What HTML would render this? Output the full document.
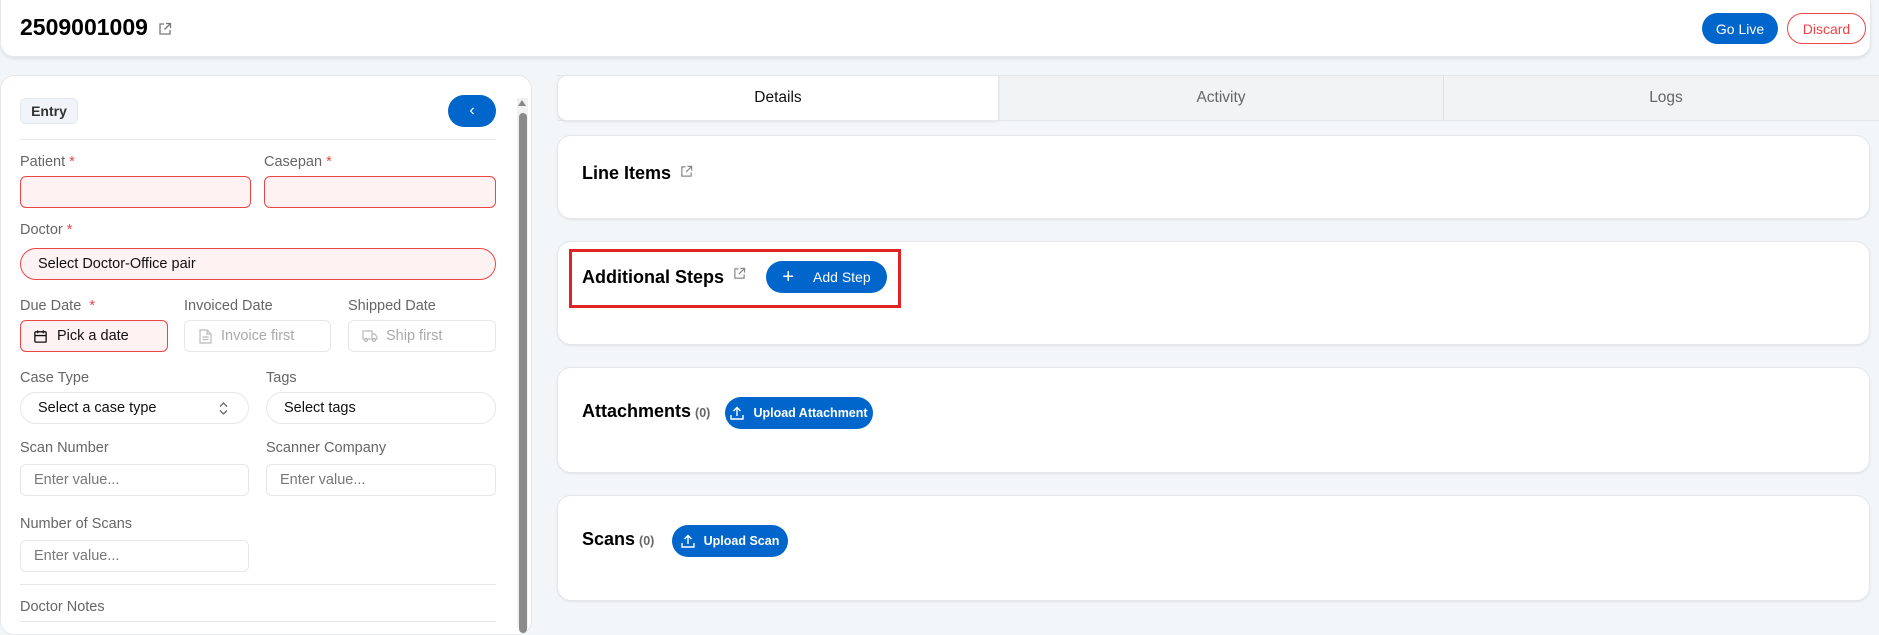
<!DOCTYPE html>
<html><head><meta charset="utf-8"><style>
*{box-sizing:border-box;margin:0;padding:0}
body{width:1879px;height:622px;overflow:hidden;background:#f3f6f9;font-family:"Liberation Sans",Arial,sans-serif;position:relative}
.abs{position:absolute}
.hdr{left:0;top:0;width:1871px;height:57px;background:#fff;border:1px solid #e5e7eb;border-top:none;border-radius:0 0 14px 14px;box-shadow:0 2px 3px rgba(0,0,0,.08)}
.title{left:20px;top:14px;font-size:23px;font-weight:bold;color:#000}
.btn{position:absolute;border-radius:999px;display:flex;align-items:center;justify-content:center;font-size:14px}
.panel{left:0;top:75px;width:532px;height:560px;background:#fff;border:1px solid #e5e7eb;border-radius:14px}
.lbl{position:absolute;font-size:14.5px;color:#666}
.lbl i{color:#ef4444;font-style:normal}
.inp{position:absolute;height:32px;border:1px solid #e5e7eb;border-radius:6px;background:#fff;font-size:14.5px;color:#777;display:flex;align-items:center;padding-left:13px}
.err{background:#fef2f2;border-color:#ef4444;color:#111}
.pill{border-radius:999px}
.card{position:absolute;left:557px;width:1313px;background:#fff;border:1px solid #e5e7eb;border-radius:14px;box-shadow:0 1px 2px rgba(0,0,0,.08)}
.ct{position:absolute;left:24px;font-size:18px;font-weight:bold;color:#000}
.cnt{font-size:12.5px;color:#666;font-weight:bold;margin-left:4px}
.bb{background:#0066cc;color:#fff;font-weight:bold;font-size:12.5px}
</style></head><body>
<div class="abs hdr"></div>
<div class="abs title">2509001009</div>
<svg class="abs" style="left:158px;top:22px" width="14" height="14" viewBox="0 0 14 14" fill="none" stroke="#777" stroke-width="1.3"><path d="M6 2H2v10h10V8M8 1.5h4.5V6M12.5 1.5L6.5 7.5"/></svg>
<div class="btn" style="left:1702px;top:13px;width:76px;height:31px;background:#0066cc;color:#fff">Go Live</div>
<div class="btn" style="left:1787px;top:13px;width:79px;height:31px;border:1px solid #ef4444;color:#ef4444;background:#fff">Discard</div>

<div class="abs panel"></div>
<div class="abs" style="left:20px;top:98px;width:58px;height:26px;background:#f1f5f9;border:1px solid #e2e8f0;border-radius:6px;font-size:14px;font-weight:bold;color:#333;display:flex;align-items:center;justify-content:center">Entry</div>
<div class="btn" style="left:448px;top:95px;width:48px;height:32px;background:#0066cc;color:#fff;font-size:16px">‹</div>
<div class="abs" style="left:517px;top:98px;width:11px;height:530px;background:#f1f1f1"></div>
<div class="abs" style="left:518px;top:100px;width:0;height:0;border-left:4.5px solid transparent;border-right:4.5px solid transparent;border-bottom:6px solid #888"></div>
<div class="abs" style="left:519px;top:113px;width:8px;height:520px;background:#8a8a8a;border-radius:4px"></div>
<div class="abs" style="left:20px;top:139px;width:476px;height:1px;background:#e5e7eb"></div>

<div class="lbl" style="left:20px;top:154px">Patient <i>*</i></div>
<div class="lbl" style="left:264px;top:154px">Casepan <i>*</i></div>
<div class="inp err" style="left:20px;top:176px;width:231px"></div>
<div class="inp err" style="left:264px;top:176px;width:232px"></div>
<div class="lbl" style="left:20px;top:222px">Doctor <i>*</i></div>
<div class="inp err pill" style="left:20px;top:248px;width:476px;padding-left:17px">Select Doctor-Office pair</div>

<div class="lbl" style="left:20px;top:298px">Due Date &nbsp;<i>*</i></div>
<div class="lbl" style="left:184px;top:298px">Invoiced Date</div>
<div class="lbl" style="left:348px;top:298px">Shipped Date</div>
<div class="inp err" style="left:20px;top:320px;width:148px;padding-left:12px"><svg width="15" height="15" viewBox="0 0 16 16" fill="none" stroke="#111" stroke-width="1.4" style="margin-right:9px"><rect x="2" y="3" width="12" height="11" rx="1"/><path d="M2 7h12M5 1.5v3M11 1.5v3"/></svg>Pick a date</div>
<div class="inp" style="left:184px;top:320px;width:147px;color:#aaa;padding-left:14px"><svg width="13" height="15" viewBox="0 0 13 15" fill="none" stroke="#bbb" stroke-width="1.2" style="margin-right:9px"><path d="M1 1h7l4 4v9H1z M8 1v4h4 M3.5 8h6M3.5 10.5h6"/></svg>Invoice first</div>
<div class="inp" style="left:348px;top:320px;width:148px;color:#aaa;padding-left:13px"><svg width="16" height="14" viewBox="0 0 16 14" fill="none" stroke="#bbb" stroke-width="1.2" style="margin-right:8px"><path d="M1 2h9v8H1zM10 5h3l2 3v2h-5"/><circle cx="4" cy="11" r="1.5"/><circle cx="12" cy="11" r="1.5"/></svg>Ship first</div>

<div class="lbl" style="left:20px;top:370px">Case Type</div>
<div class="lbl" style="left:266px;top:370px">Tags</div>
<div class="inp pill" style="left:20px;top:392px;width:229px;color:#111;padding-left:17px">Select a case type<svg style="position:absolute;right:20px;top:9px" width="9" height="13" viewBox="0 0 9 13" fill="none" stroke="#666" stroke-width="1.3"><path d="M1 4.5L4.5 1 8 4.5M1 8.5L4.5 12 8 8.5"/></svg></div>
<div class="inp pill" style="left:266px;top:392px;width:230px;color:#111;padding-left:17px">Select tags</div>

<div class="lbl" style="left:20px;top:440px">Scan Number</div>
<div class="lbl" style="left:266px;top:440px">Scanner Company</div>
<div class="inp" style="left:20px;top:464px;width:229px">Enter value...</div>
<div class="inp" style="left:266px;top:464px;width:230px">Enter value...</div>
<div class="lbl" style="left:20px;top:516px">Number of Scans</div>
<div class="inp" style="left:20px;top:540px;width:229px">Enter value...</div>
<div class="abs" style="left:20px;top:584px;width:476px;height:1px;background:#e5e7eb"></div>
<div class="lbl" style="left:20px;top:599px">Doctor Notes</div>
<div class="abs" style="left:20px;top:621px;width:476px;height:1px;background:#e5e7eb"></div>

<div class="abs" style="left:557px;top:75px;width:1322px;height:46px;background:#f1f3f5;border-top:1px solid #e5e7eb;border-bottom:1px solid #e5e7eb"></div>
<div class="abs" style="left:557px;top:75px;width:442px;height:46px;background:#fff;border:1px solid #e5e7eb;border-radius:10px 0 0 10px;display:flex;align-items:center;justify-content:center;font-size:15.5px;color:#111;box-shadow:0 1px 2px rgba(0,0,0,.08)">Details</div>
<div class="abs" style="left:999px;top:76px;width:444px;height:44px;display:flex;align-items:center;justify-content:center;font-size:15.5px;color:#666">Activity</div>
<div class="abs" style="left:1443px;top:76px;width:1px;height:44px;background:#e0e0e0"></div>
<div class="abs" style="left:1444px;top:76px;width:444px;height:44px;display:flex;align-items:center;justify-content:center;font-size:15.5px;color:#666">Logs</div>

<div class="card" style="top:135px;height:84px"><div class="ct" style="top:27px">Line Items</div>
<svg class="abs" style="left:122px;top:29px" width="13" height="13" viewBox="0 0 14 14" fill="none" stroke="#888" stroke-width="1.3"><path d="M6 2H2v10h10V8M8 1.5h4.5V6M12.5 1.5L6.5 7.5"/></svg></div>
<div class="card" style="top:241px;height:104px"><div class="ct" style="top:25px">Additional Steps</div>
<svg class="abs" style="left:175px;top:25px" width="13" height="13" viewBox="0 0 14 14" fill="none" stroke="#888" stroke-width="1.3"><path d="M6 2H2v10h10V8M8 1.5h4.5V6M12.5 1.5L6.5 7.5"/></svg>
<div class="btn bb" style="left:208px;top:19px;width:121px;height:32px;font-weight:normal;font-size:14px"><span style="font-size:20px;margin-right:19px;font-weight:normal">+</span>Add Step</div></div>
<div class="abs" style="left:569px;top:249px;width:332px;height:59px;border:3px solid #e02424"></div>
<div class="card" style="top:367px;height:106px"><div class="ct" style="top:33px">Attachments<span class="cnt">(0)</span></div>
<div class="btn bb" style="left:167px;top:29px;width:148px;height:32px"><svg width="14" height="14" viewBox="0 0 14 14" fill="none" stroke="#fff" stroke-width="1.4" style="margin-right:9px"><path d="M1 9v4h12V9M7 10V1.5M3.5 5L7 1.5 10.5 5"/></svg>Upload Attachment</div></div>
<div class="card" style="top:495px;height:106px"><div class="ct" style="top:33px">Scans<span class="cnt">(0)</span></div>
<div class="btn bb" style="left:114px;top:29px;width:116px;height:32px"><svg width="14" height="14" viewBox="0 0 14 14" fill="none" stroke="#fff" stroke-width="1.4" style="margin-right:9px"><path d="M1 9v4h12V9M7 10V1.5M3.5 5L7 1.5 10.5 5"/></svg>Upload Scan</div></div>
</body></html>
